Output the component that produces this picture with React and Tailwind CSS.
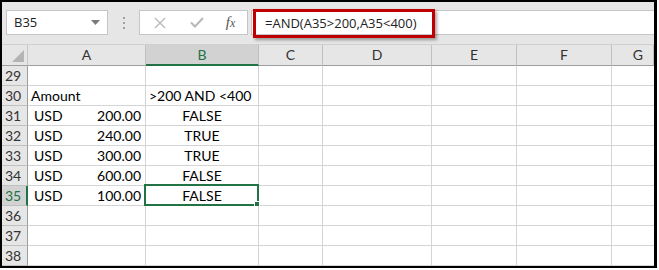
import React from "react";

const cols = ["A", "B", "C", "D", "E", "F", "G"];

const rows = [
  { n: 29 },
  { n: 30, a: "Amount", b: ">200 AND <400", header: true },
  { n: 31, cur: "USD", amt: "200.00", b: "FALSE" },
  { n: 32, cur: "USD", amt: "240.00", b: "TRUE" },
  { n: 33, cur: "USD", amt: "300.00", b: "TRUE" },
  { n: 34, cur: "USD", amt: "600.00", b: "FALSE" },
  { n: 35, cur: "USD", amt: "100.00", b: "FALSE", sel: true },
  { n: 36 },
  { n: 37 },
  { n: 38 },
];

const cellFont = { fontFamily: "Lato, 'Liberation Sans', sans-serif" };

export default function App() {
  return (
    <div className="w-[659px] h-[270px] bg-white">
      <div className="w-[657px] h-[268px] border-l-2 border-t-2 border-r-[3px] border-b-2 border-black bg-white flex flex-col overflow-hidden">
        {/* Formula bar */}
        <div
          className="h-[43px] shrink-0 bg-[#e6e6e6] flex items-start pt-[8px] border-b border-[#d0d0d0]"
          style={{ fontFamily: "'Open Sans', 'Noto Sans', sans-serif" }}
        >
          <div className="ml-[4px] w-[102px] h-[25px] bg-white border border-[#c6c6c6] flex items-center justify-between pl-[7px] pr-[7px]">
            <span className="text-[13px] text-[#222]">B35</span>
            <svg width="9" height="5" viewBox="0 0 9 5">
              <path d="M0 0 L9 0 L4.5 5 Z" fill="#7a7a7a" />
            </svg>
          </div>
          <div className="w-[31px] h-[25px] flex flex-col items-center justify-center gap-[3px]">
            <span className="w-[2px] h-[2px] bg-[#a0a0a0]" />
            <span className="w-[2px] h-[2px] bg-[#a0a0a0]" />
            <span className="w-[2px] h-[2px] bg-[#a0a0a0]" />
          </div>
          <div className="w-[109px] h-[25px] bg-white border border-[#c6c6c6] flex items-center">
            <div className="w-[38px] flex justify-center pl-[2px]">
              <svg width="12" height="12" viewBox="0 0 12 12">
                <path d="M1 1 L11 11 M11 1 L1 11" stroke="#b8b8b8" strokeWidth="1.4" fill="none" />
              </svg>
            </div>
            <div className="w-[38px] flex justify-center">
              <svg width="14" height="11" viewBox="0 0 14 11">
                <path d="M1 5.5 L5 9.5 L13 1" stroke="#b8b8b8" strokeWidth="2" fill="none" />
              </svg>
            </div>
            <div className="flex-1 flex justify-center pr-[2px]">
              <span
                className="italic text-[15px] text-[#555] leading-none"
                style={{ fontFamily: "'Liberation Serif', 'DejaVu Serif', serif" }}
              >
                f<span className="text-[12px]">x</span>
              </span>
            </div>
          </div>
          <div className="ml-[3px] flex-1 h-[25px] bg-white border-t border-b border-l border-[#c6c6c6] relative">
            <div className="absolute left-[1px] top-[-2px] w-[182px] h-[29px] border-[3px] border-[#c00000] shadow-[2px_2px_3px_rgba(0,0,0,0.35)] flex items-center pl-[9px]">
              <span className="text-[13px] text-[#222] whitespace-nowrap">=AND(A35&gt;200,A35&lt;400)</span>
            </div>
          </div>
        </div>

        {/* Grid */}
        <div
          className="grid grid-cols-[26px_118px_113px_64px_109px_85px_95px_1fr] grid-rows-[21px_repeat(10,20px)] text-[14px] leading-[18px] text-black whitespace-nowrap"
          style={cellFont}
        >
          {/* Header row */}
          <div className="bg-[#e6e6e6] border-r border-b border-[#9e9e9e] border-r-[#c8c8c8] flex items-end justify-end p-[3px]">
            <svg width="12" height="12" viewBox="0 0 12 12">
              <path d="M12 0 L12 12 L0 12 Z" fill="#b4b4b4" />
            </svg>
          </div>
          {cols.map((c) =>
            c === "B" ? (
              <div
                key={c}
                className="bg-[#d2d2d2] border-r border-r-[#c0c0c0] border-b-2 border-b-[#217346] flex items-center justify-center text-[#217346] pt-[1px]"
              >
                {c}
              </div>
            ) : (
              <div
                key={c}
                className={`bg-[#e6e6e6] border-r border-r-[#c0c0c0] border-b border-b-[#9e9e9e] flex items-center text-[#333] ${
                  c === "G" ? "justify-end pr-[10px]" : "justify-center"
                }`}
              >
                {c}
              </div>
            )
          )}

          {rows.map((r) => (
            <React.Fragment key={r.n}>
              {r.sel ? (
                <div className="bg-[#d2d2d2] border-r-2 border-r-[#217346] border-b border-b-[#c0c0c0] flex items-center pl-[3px] text-[#217346]">
                  {r.n}
                </div>
              ) : (
                <div className="bg-[#e6e6e6] border-r border-r-[#9e9e9e] border-b border-b-[#c0c0c0] flex items-center pl-[3px] text-[#333]">
                  {r.n}
                </div>
              )}
              {/* A */}
              <div className="border-r border-b border-[#d4d4d4] flex items-center overflow-hidden">
                {r.header ? (
                  <span className="pl-[3px]">{r.a}</span>
                ) : r.cur ? (
                  <div className="flex-1 flex justify-between pl-[6px] pr-[4px]">
                    <span>{r.cur}</span>
                    <span>{r.amt}</span>
                  </div>
                ) : null}
              </div>
              {/* B */}
              <div
                className={`border-r border-b border-[#d4d4d4] flex items-center relative ${
                  r.header ? "pl-[3px]" : "justify-center"
                }`}
              >
                <span>{r.b}</span>
                {r.sel && (
                  <div className="absolute -left-[2px] -top-[2px] -right-[1px] -bottom-[1px] border-2 border-[#217346]">
                    <div className="absolute -right-[3px] -bottom-[3px] w-[6px] h-[6px] bg-[#217346] border border-white" />
                  </div>
                )}
              </div>
              <div className="border-r border-b border-[#d4d4d4]" />
              <div className="border-r border-b border-[#d4d4d4]" />
              <div className="border-r border-b border-[#d4d4d4]" />
              <div className="border-r border-b border-[#d4d4d4]" />
              <div className="border-b border-[#d4d4d4]" />
            </React.Fragment>
          ))}
        </div>
      </div>
    </div>
  );
}
